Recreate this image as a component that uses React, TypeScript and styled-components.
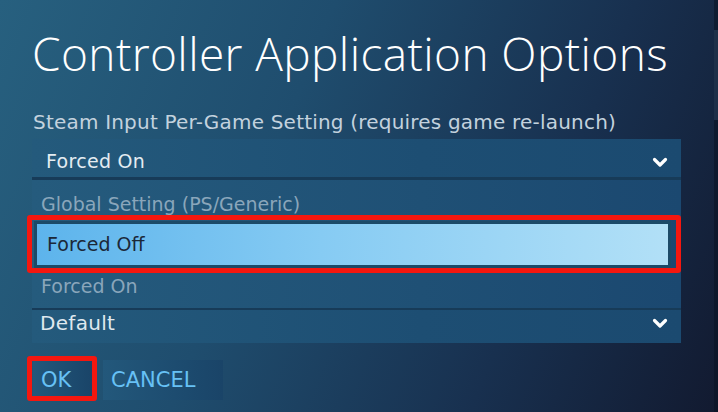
import React from "react";
import styled, { createGlobalStyle } from "styled-components";

const GlobalBody = createGlobalStyle`
  html, body {
    margin: 0;
    padding: 0;
    background: #131b31;
  }
  * { box-sizing: border-box; }
`;

const Page = styled.div`
  width: 718px;
  height: 412px;
  overflow: hidden;
  display: flex;
  background: linear-gradient(112deg, #27607f 0%, #1f4d6e 38%, #18304f 72%, #121a30 100%);
  font-family: "DejaVu Sans", "Open Sans", sans-serif;
`;

const Content = styled.div`
  flex: 1;
  padding: 30px 0 0 32px;
`;

const ScrollTrack = styled.div`
  width: 4px;
  height: 100%;
  background: rgba(10, 18, 34, 0.55);
  padding-top: 30px;
`;

const ScrollThumb = styled.div`
  height: 90px;
  background: rgba(60, 90, 120, 0.35);
`;

const Title = styled.h1`
  margin: 0;
  font-family: "Open Sans", "Noto Sans", sans-serif;
  font-size: 46px;
  line-height: 46px;
  font-weight: 300;
  color: #ffffff;
  letter-spacing: 0.4px;
  white-space: nowrap;
`;

const Label = styled.div`
  margin-top: 36px;
  font-size: 20px;
  line-height: 20px;
  color: #c3d2de;
  padding-left: 1px;
  letter-spacing: 0.2px;
  white-space: nowrap;
`;

const Select = styled.div`
  margin-top: 7px;
  width: 649px;
`;

const SelectHead = styled.div<{ $height: number; $pad: number; $size: number; $color: string }>`
  height: ${(p) => p.$height}px;
  display: flex;
  align-items: flex-start;
  justify-content: space-between;
  padding: ${(p) => p.$pad}px 14px 0 ${(p) => (p.$size > 19 ? 8 : 14)}px;
  background: linear-gradient(to right, #245a7c, #1d4e73 60%, #1b4a70);
  font-size: ${(p) => p.$size}px;
  line-height: ${(p) => p.$size}px;
  color: ${(p) => p.$color};
  letter-spacing: 0.3px;
`;

const Divider = styled.div<{ $h: number }>`
  height: ${(p) => p.$h}px;
  background: #173b58;
`;

const List = styled.div`
  background: linear-gradient(to right, #255b7d, #1f5075 60%, #1b4870);
`;

const Option = styled.div<{ $pad: number }>`
  height: 38px;
  padding: ${(p) => p.$pad}px 0 0 9px;
  font-size: 19px;
  line-height: 19px;
  color: #8aa6bb;
`;

const ActiveWrap = styled.div`
  height: 52px;
  padding: 3px 10px 2px 2px;
`;

const ActiveOption = styled.div`
  position: relative;
  height: 47px;
  border: 3px solid #1c4a68;
  padding: 11px 0 0 10px;
  background: linear-gradient(to right, #5db4ec, #86cbf3 45%, #b2e0f7);
  font-size: 19px;
  line-height: 19px;
  color: #1b2838;
`;

const RedMark = styled.div<{ $t: number; $r: number; $b: number; $l: number }>`
  position: absolute;
  top: ${(p) => p.$t}px;
  right: ${(p) => p.$r}px;
  bottom: ${(p) => p.$b}px;
  left: ${(p) => p.$l}px;
  border: 5px solid #f5170f;
  border-radius: 3px;
  pointer-events: none;
`;

const Chevron = styled.svg`
  width: 16px;
  height: 11px;
  margin-top: 5px;
  margin-right: -1px;
  flex: none;
`;

const ButtonRow = styled.div`
  margin-top: 17px;
  display: flex;
  gap: 10px;
  padding-left: 1px;
`;

const Button = styled.div<{ $w: number }>`
  position: relative;
  width: ${(p) => p.$w}px;
  height: 40px;
  padding-left: 8px;
  background: linear-gradient(to right, #23587b, #1c4a6e 70%, #1a4468);
  font-size: 21px;
  line-height: 41px;
  color: #67c1f5;
`;

const Arrow = () => (
  <Chevron viewBox="0 0 16 11">
    <polyline points="2.5,2.5 8,8 13.5,2.5" fill="none" stroke="#ffffff" strokeWidth="3.2" strokeLinecap="round" strokeLinejoin="round" />
  </Chevron>
);

const App = () => {
  return (
    <>
      <GlobalBody />
      <Page>
        <Content>
          <Title>Controller Application Options</Title>
          <Label>Steam Input Per-Game Setting (requires game re-launch)</Label>
          <Select>
            <SelectHead $height={38} $pad={13} $size={19} $color="#e4ecf2">
              <span>Forced On</span>
              <Arrow />
            </SelectHead>
            <Divider $h={3} />
            <List>
              <Option $pad={15}>Global Setting (PS/Generic)</Option>
              <ActiveWrap>
                <ActiveOption>
                  Forced Off
                  <RedMark $t={-9} $r={-13} $b={-8} $l={-10} />
                </ActiveOption>
              </ActiveWrap>
              <Option $pad={7}>Forced On</Option>
            </List>
            <Divider $h={2} />
            <SelectHead $height={33} $pad={3} $size={20} $color="#dfe8ef">
              <span>Default</span>
              <Arrow />
            </SelectHead>
          </Select>
          <ButtonRow>
            <Button $w={60}>
              OK
              <RedMark $t={-4} $r={-4} $b={-1} $l={-6} />
            </Button>
            <Button $w={120}>CANCEL</Button>
          </ButtonRow>
        </Content>
        <ScrollTrack>
          <ScrollThumb />
        </ScrollTrack>
      </Page>
    </>
  );
};

export default App;
